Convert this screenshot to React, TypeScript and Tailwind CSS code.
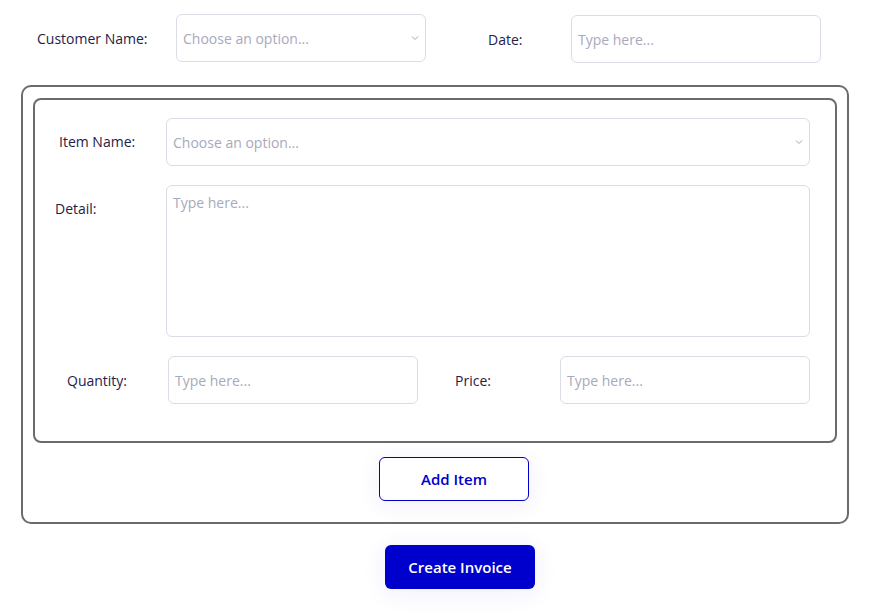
import { ChangeEvent, useState } from "react";

interface InvoiceForm {
  customer: string;
  date: string;
  item: string;
  detail: string;
  quantity: string;
  price: string;
}

const fieldClass =
  "h-[48px] w-[250px] rounded-[6px] border border-[#dcdce6] bg-white px-[6px] text-[14px] text-[#1e2248] placeholder:text-[#a7a9bd] outline-none";

function Chevron() {
  return (
    <svg
      width="8"
      height="5"
      viewBox="0 0 8 5"
      className="pointer-events-none absolute right-[7px] top-1/2 -translate-y-1/2"
    >
      <path d="M1 1l3 3 3-3" fill="none" stroke="#a0a2b4" strokeWidth="1" />
    </svg>
  );
}

function SelectBox({ width, value, onChange }: { width: string; value: string; onChange: (e: ChangeEvent<HTMLSelectElement>) => void }) {
  return (
    <div className={`relative ${width}`}>
      <select
        value={value}
        onChange={onChange}
        className={`h-[48px] w-full appearance-none rounded-[6px] border border-[#dcdce6] bg-white pl-[6px] text-[14px] outline-none ${
          value ? "text-[#1e2248]" : "text-[#a7a9bd]"
        }`}
      >
        <option value="">Choose an option...</option>
        <option value="a">Option A</option>
        <option value="b">Option B</option>
      </select>
      <Chevron />
    </div>
  );
}

export default function App() {
  const [form, setForm] = useState<InvoiceForm>({
    customer: "",
    date: "",
    item: "",
    detail: "",
    quantity: "",
    price: "",
  });

  const set = (name: keyof InvoiceForm) => (e: ChangeEvent<HTMLInputElement | HTMLSelectElement | HTMLTextAreaElement>) =>
    setForm({ ...form, [name]: e.target.value });

  return (
    <div className="h-[614px] w-[888px] bg-white font-['Open_Sans',sans-serif] text-[14px] text-[#1e2248]">
      {/* header row */}
      <div className="flex h-[48px] items-start mt-[14px]">
        <label className="w-[176px] pl-[37px] pt-[1px] leading-[48px]">Customer Name:</label>
        <SelectBox width="w-[250px]" value={form.customer} onChange={set("customer")} />
        <label className="ml-[62px] w-[83px] pt-[2px] leading-[48px]">Date:</label>
        <input
          className={`${fieldClass} mt-[1px]`}
          placeholder="Type here..."
          value={form.date}
          onChange={set("date")}
        />
      </div>

      {/* items box */}
      <div className="ml-[21px] mt-[23px] h-[439px] w-[828px] rounded-[10px] border-2 border-[#6b6b6b] pl-[10px] pt-[11px]">
        <div className="h-[345px] w-[804px] rounded-[8px] border-2 border-[#6b6b6b] pt-[18px]">
          <div className="flex items-center">
            <label className="-mt-[2px] w-[131px] pl-[24px]">Item Name:</label>
            <SelectBox width="w-[644px]" value={form.item} onChange={set("item")} />
          </div>
          <div className="mt-[19px] flex items-start">
            <label className="mt-[13px] w-[131px] pl-[20px]">Detail:</label>
            <textarea
              className="h-[152px] w-[644px] resize-none rounded-[6px] border border-[#dcdce6] px-[6px] py-[6px] text-[14px] outline-none placeholder:text-[#a7a9bd]"
              placeholder="Type here..."
              value={form.detail}
              onChange={set("detail")}
            />
          </div>
          <div className="mt-[19px] flex items-center">
            <label className="w-[133px] pl-[32px] pt-[1px]">Quantity:</label>
            <input className={fieldClass} placeholder="Type here..." value={form.quantity} onChange={set("quantity")} />
            <label className="ml-[37px] w-[105px] pt-[1px]">Price:</label>
            <input className={fieldClass} placeholder="Type here..." value={form.price} onChange={set("price")} />
          </div>
        </div>
        <button
          type="button"
          className="ml-[346px] mt-[14px] h-[44px] w-[150px] rounded-[6px] border border-[#0000cd] bg-white text-[15px] font-semibold text-[#0000cd] shadow-[0_4px_24px_rgba(40,40,200,0.07)]"
        >
          Add Item
        </button>
      </div>

      <button
        type="button"
        className="ml-[385px] mt-[21px] h-[44px] w-[150px] rounded-[6px] bg-[#0000cd] text-[15px] font-semibold text-white shadow-[0_4px_24px_rgba(40,40,200,0.08)]"
      >
        Create Invoice
      </button>
    </div>
  );
}
